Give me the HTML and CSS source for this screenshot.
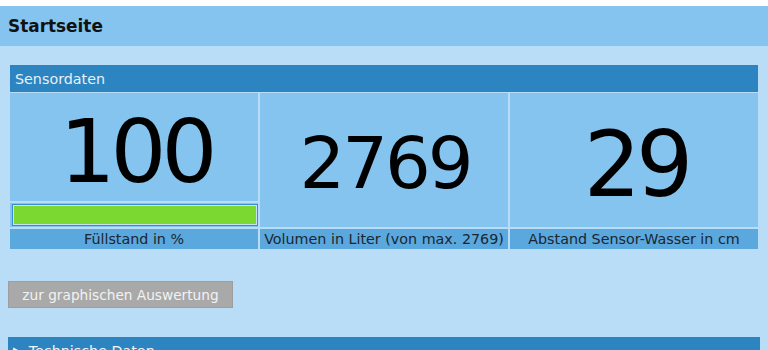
FILE: index.html
```html
<!DOCTYPE html>
<html lang="de">
<head>
    <meta charset="UTF-8">
    <meta name="viewport" content="width=device-width, initial-scale=1.0">
    <title>Startseite</title>
    <link rel="stylesheet" href="styles.css">
</head>
<body>

    <div class="header">
        <h1>Startseite</h1>
    </div>

    <div class="content">
        <div class="panel">
            <div class="panel-title">Sensordaten</div>

            <div class="sensor-grid">
                <div class="value value-level">100</div>
                <div class="value value-volume">2769</div>
                <div class="value value-distance">29</div>
                <div class="level-cell">
                    <div class="progress">
                        <div class="progress-fill" style="width: 100%"></div>
                    </div>
                </div>
                <div class="caption">Füllstand in %</div>
                <div class="caption">Volumen in Liter (von max. 2769)</div>
                <div class="caption">Abstand Sensor-Wasser in cm</div>
            </div>
        </div>

        <button class="btn-chart">zur graphischen Auswertung</button>

        <div class="collapse-bar">
            <span class="arrow">&#9654;</span> Technische Daten
        </div>
    </div>

</body>
</html>
```

FILE: styles.css
```css
* {
    margin: 0;
    padding: 0;
    box-sizing: border-box;
}

body {
    font-family: 'DejaVu Sans', Verdana, sans-serif;
    background-color: #b9ddf6;
    color: #1c2530;
    overflow: hidden;
}

.header {
    border-top: 6px solid #ffffff;
    background-color: #85c4ee;
    height: 46px;
    display: flex;
    align-items: center;
    padding-left: 8px;
}

.header h1 {
    font-size: 16.9px;
    font-weight: bold;
    color: #111;
}

.content {
    padding: 19px 8px 0 8px;
}

.panel {
    margin: 0 2px;
}

.panel-title {
    background-color: #2c84c0;
    color: #e6f1fa;
    font-size: 14.3px;
    height: 27px;
    display: flex;
    align-items: center;
    padding-left: 5px;
    margin-bottom: 1px;
}

.sensor-grid {
    display: grid;
    grid-template-columns: repeat(3, 1fr);
    grid-template-rows: 108px 24px 20px;
    gap: 2px;
}

.value {
    background-color: #85c4ee;
    color: #000;
    display: flex;
    justify-content: center;
    align-items: center;
    line-height: 1;
}

.value-level {
    font-size: 88px;
    letter-spacing: -5px;
    padding-top: 10px;
    padding-left: 4px;
}

.value-volume {
    grid-row: 1 / 3;
    grid-column: 2;
    font-size: 72px;
    letter-spacing: -3px;
    padding-top: 6px;
    padding-left: 2px;
}

.value-distance {
    grid-row: 1 / 3;
    grid-column: 3;
    font-size: 90px;
    letter-spacing: -5px;
    padding-top: 10px;
    padding-left: 4px;
}

.level-cell {
    grid-row: 2;
    grid-column: 1;
    background-color: #85c4ee;
    padding: 1px 0 1px 2px;
}

.progress {
    height: 22px;
    border: 1px solid #3a8ccc;
    padding: 1px;
    background-color: #c6e3f8;
}

.progress-fill {
    height: 100%;
    background-color: #7ad830;
}

.caption {
    background-color: #5aa8de;
    font-size: 14.3px;
    text-align: center;
    line-height: 20px;
    white-space: nowrap;
    overflow: hidden;
}

.btn-chart {
    display: block;
    margin-top: 32px;
    width: 225px;
    height: 27px;
    background-color: #a9a9a9;
    border: 1px solid #9e9e9e;
    color: #f2f2f2;
    font-family: 'DejaVu Sans', Verdana, sans-serif;
    font-size: 13.7px;
    cursor: pointer;
}

.collapse-bar {
    margin-top: 29px;
    background-color: #2c84c0;
    color: #f0f6fb;
    font-size: 14.3px;
    height: 27px;
    display: flex;
    align-items: center;
    padding-left: 5px;
    gap: 8px;
}

.collapse-bar .arrow {
    font-size: 10px;
}
```
